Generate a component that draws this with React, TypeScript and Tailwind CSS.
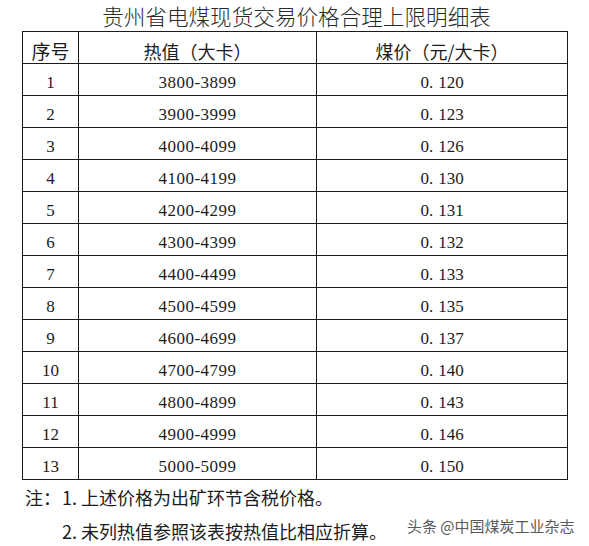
import React from "react";

const rows: [string, string, string][] = [
  ["1", "3800-3899", "120"],
  ["2", "3900-3999", "123"],
  ["3", "4000-4099", "126"],
  ["4", "4100-4199", "130"],
  ["5", "4200-4299", "131"],
  ["6", "4300-4399", "132"],
  ["7", "4400-4499", "133"],
  ["8", "4500-4599", "135"],
  ["9", "4600-4699", "137"],
  ["10", "4700-4799", "140"],
  ["11", "4800-4899", "143"],
  ["12", "4900-4999", "146"],
  ["13", "5000-5099", "150"],
];

const cjk = "font-['Noto_Sans_CJK_SC',sans-serif]";
const serif = "font-['Liberation_Serif','Noto_Sans_CJK_SC',serif]";

export default function App() {
  return (
    <div className="relative w-[589px] h-[546px] bg-white text-[#1c1c1c] overflow-hidden">
      <div
        className={`h-[31px] flex items-center justify-center pl-[4px] pt-[1px] text-[21.6px] leading-[30px] font-light text-[#2a2a2a] whitespace-nowrap ${cjk}`}
      >
        贵州省电煤现货交易价格合理上限明细表
      </div>
      <table className="ml-[22px] w-[546px] border-collapse border border-[#1a1a1a] table-fixed">
        <colgroup>
          <col className="w-[56px]" />
          <col className="w-[238px]" />
          <col />
        </colgroup>
        <thead>
          <tr className="h-[32px]">
            <th className={`border border-[#1a1a1a] p-0 pt-[6px] text-[19px] leading-[22px] font-normal ${cjk}`}>
              序号
            </th>
            <th className={`border border-[#1a1a1a] p-0 pt-[6px] text-[18px] leading-[22px] font-normal ${cjk}`}>
              热值（大卡）
            </th>
            <th className={`border border-[#1a1a1a] p-0 pt-[6px] text-[18px] leading-[22px] font-normal ${cjk}`}>
              煤价（元/大卡）
            </th>
          </tr>
        </thead>
        <tbody>
          {rows.map(([n, range, price]) => (
            <tr key={n} className="h-[32px]">
              <td className={`border border-[#1a1a1a] p-0 pt-[7px] text-center text-[17px] leading-[22px] ${serif}`}>
                {n}
              </td>
              <td className={`border border-[#1a1a1a] p-0 pt-[7px] text-center text-[17px] leading-[22px] tracking-[0.5px] ${serif}`}>
                {range}
              </td>
              <td className={`border border-[#1a1a1a] p-0 pt-[7px] text-center text-[17px] leading-[22px] ${serif}`}>
                0.<span className="ml-[5px]">{price}</span>
              </td>
            </tr>
          ))}
        </tbody>
      </table>
      <div className={`pl-[25px] text-[18px] leading-[34px] text-[#1c1c1c] ${cjk}`}>
        <div className="flex">
          <span className="w-[37px] shrink-0">注：</span>
          <span>1. 上述价格为出矿环节含税价格。</span>
        </div>
        <div className="flex">
          <span className="w-[37px] shrink-0"></span>
          <span>2. 未列热值参照该表按热值比相应折算。</span>
        </div>
      </div>
      <div
        className={`absolute left-[407px] top-[516px] text-[15px] leading-[20px] text-[#5a5a5a] whitespace-nowrap ${cjk} [text-shadow:0_0_2px_#fff]`}
      >
        头条 @中国煤炭工业杂志
      </div>
    </div>
  );
}
